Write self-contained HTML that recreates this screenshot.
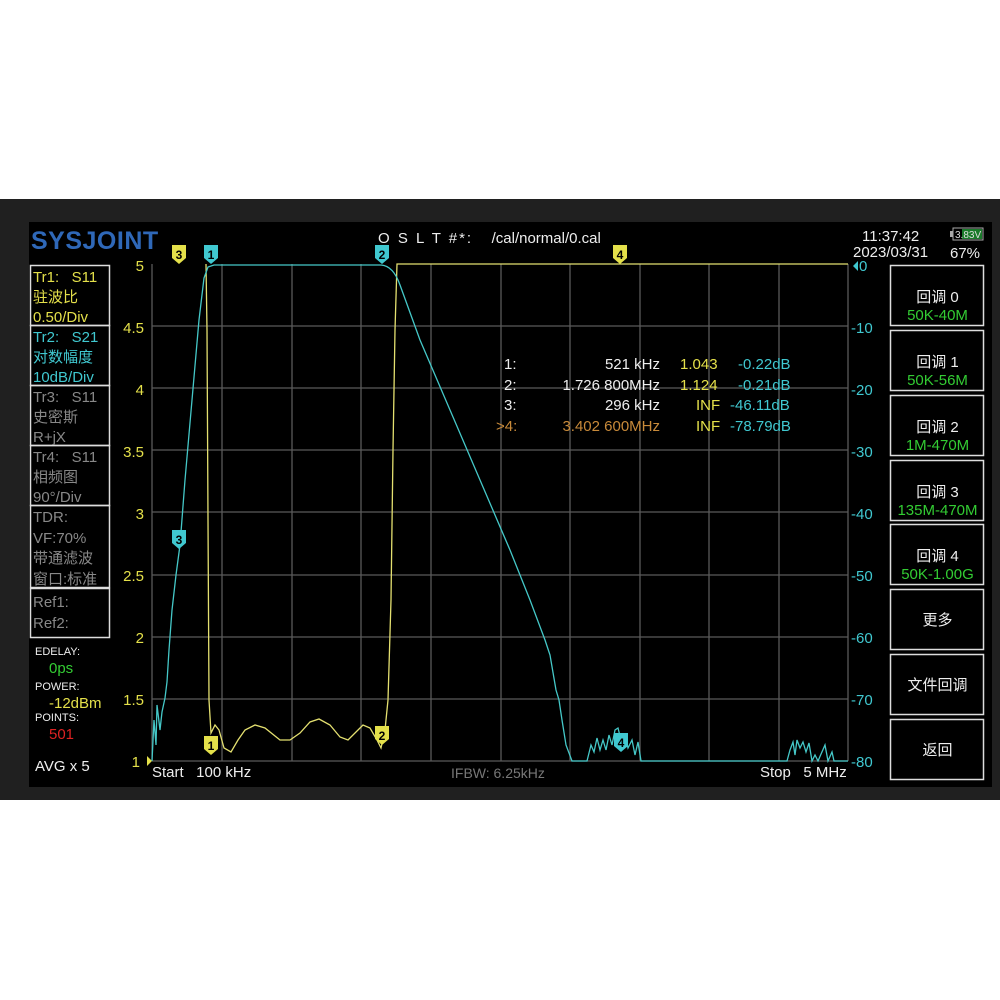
<!DOCTYPE html>
<html><head><meta charset="utf-8"><style>
html,body{margin:0;padding:0;background:#fff;width:1000px;height:1000px;overflow:hidden}
body{position:relative;font-family:"Liberation Sans","Noto Sans CJK SC",sans-serif}
.t{position:absolute;white-space:nowrap;font-size:13px;line-height:1}
</style></head><body>
<div style="position:absolute;left:0;top:199px;width:1000px;height:601px;background:#202020"></div>
<div style="position:absolute;left:29px;top:222px;width:963px;height:565px;background:#000"></div>
<svg width="1000" height="1000" style="position:absolute;left:0;top:0" font-family="Liberation Sans, Noto Sans CJK SC, sans-serif">
<g stroke="#5a5a5a" stroke-width="1.3">
<line x1="152" y1="326" x2="848" y2="326"/><line x1="152" y1="388" x2="848" y2="388"/><line x1="152" y1="450" x2="848" y2="450"/><line x1="152" y1="512" x2="848" y2="512"/><line x1="152" y1="575" x2="848" y2="575"/><line x1="152" y1="637" x2="848" y2="637"/><line x1="152" y1="699" x2="848" y2="699"/><line x1="152" y1="761" x2="848" y2="761"/>
<line x1="152" y1="264" x2="152" y2="761"/><line x1="222" y1="264" x2="222" y2="761"/><line x1="292" y1="264" x2="292" y2="761"/><line x1="361" y1="264" x2="361" y2="761"/><line x1="431" y1="264" x2="431" y2="761"/><line x1="501" y1="264" x2="501" y2="761"/><line x1="570" y1="264" x2="570" y2="761"/><line x1="640" y1="264" x2="640" y2="761"/><line x1="709" y1="264" x2="709" y2="761"/><line x1="779" y1="264" x2="779" y2="761"/><line x1="848" y1="264" x2="848" y2="761"/>
</g>
<path fill="none" stroke="#e4e070" stroke-width="1.3" d="M206,264 L207,330 L208,520 L209,700 L211,733 L215,725 L219,730 L224,748 L231,752 L238,740 L245,730 L255,725 L265,728 L280,740 L290,740 L300,733 L310,722 L319,719 L330,725 L340,737 L348,740 L356,732 L363,725 L370,728 L377,740 L381,748 L385,730 L388,700 L391,600 L393,450 L395,330 L397,264 L848,264"/>
<path fill="none" stroke="#45c8c8" stroke-width="1.3" d="M152,761 L154,720 L156,745 L157,705 L160,730 L162,712 L165,698 L167,682 L169,650 L172,610 L176,575 L180,545 L185,480 L192,400 L199,320 L204,278 L208,267 L214,265 L380,265 Q393,265 400,285 L420,340 L450,410 L480,480 L510,550 L530,600 L545,640 L550,655 L556,690 L559,700 L562,720 L566,745 L572,761 L587,761 L591,745 L594,752 L597,738 L600,750 L603,740 L606,750 L609,735 L612,745 L615,730 L618,728 L621,740 L625,735 L628,748 L632,740 L635,755 L638,742 L641,761 L787,761 L790,750 L793,742 L795,755 L797,740 L800,748 L803,742 L806,752 L809,743 L812,761 L815,755 L818,761 L825,745 L828,761 L832,752 L834,761 L848,761"/>
<g font-size="12" font-weight="bold" text-anchor="middle">
<g fill="#e4e04a"><path d="M172,245 h14 v13 l-7,6 l-7,-6z"/><path d="M613,245 h14 v13 l-7,6 l-7,-6z"/><path d="M204,736 h14 v13 l-7,6 l-7,-6z"/><path d="M375,726 h14 v13 l-7,6 l-7,-6z"/></g>
<g fill="#40c8d0"><path d="M204,245 h14 v13 l-7,6 l-7,-6z"/><path d="M375,245 h14 v13 l-7,6 l-7,-6z"/><path d="M172,530 h14 v13 l-7,6 l-7,-6z"/><path d="M614,733 h14 v13 l-7,6 l-7,-6z"/></g>
<g fill="#000"><text x="179" y="259">3</text><text x="620" y="259">4</text><text x="211" y="750">1</text><text x="382" y="740">2</text>
<text x="211" y="259">1</text><text x="382" y="259">2</text><text x="179" y="544">3</text><text x="621" y="747">4</text></g>
</g>
<path d="M147,756 l5,5 l-5,5z" fill="#e4e04a"/><path d="M858,261 l-5,5 l5,5z" fill="#40c8d0"/>
<g fill="none" stroke="#ddd" stroke-width="1.5">
<rect x="30.5" y="265.5" width="79" height="60"/><rect x="30.5" y="325.5" width="79" height="60"/><rect x="30.5" y="385.5" width="79" height="60"/><rect x="30.5" y="445.5" width="79" height="60"/><rect x="30.5" y="505.5" width="79" height="82"/><rect x="30.5" y="588.5" width="79" height="49"/>
<rect x="890.5" y="265.5" width="93" height="60"/><rect x="890.5" y="330.5" width="93" height="60"/><rect x="890.5" y="395.5" width="93" height="60"/><rect x="890.5" y="460.5" width="93" height="60"/><rect x="890.5" y="524.5" width="93" height="60"/><rect x="890.5" y="589.5" width="93" height="60"/><rect x="890.5" y="654.5" width="93" height="60"/><rect x="890.5" y="719.5" width="93" height="60"/>
</g>
<rect x="953" y="228" width="30" height="12" fill="none" stroke="#aaa"/><rect x="950" y="231" width="3" height="6" fill="#aaa"/><rect x="962" y="229" width="20" height="10" fill="#1a7a2a"/>
<text x="955" y="238" font-size="10" fill="#ddd">3.83V</text>
</svg>
<div class="t" style="left:31px;top:229px;font-size:25px;font-weight:bold;color:#2f68b8;letter-spacing:0.5px">SYSJOINT</div>
<div class="t" style="left:378px;top:231px;font-size:15px;color:#eee;letter-spacing:2px">O S L T #*: &nbsp; <span style="letter-spacing:0">/cal/normal/0.cal</span></div>
<div class="t" style="left:862px;top:229px;font-size:15px;color:#eee">11:37:42</div>
<div class="t" style="left:853px;top:245px;font-size:15px;color:#eee">2023/03/31</div>
<div class="t" style="left:950px;top:246px;font-size:15px;color:#eee">67%</div>
<div style="position:absolute;left:33px;top:268px;font-size:15px;line-height:20px;color:#e4e04a">Tr1:&nbsp;&nbsp;&nbsp;S11<br>驻波比<br>0.50/Div</div>
<div style="position:absolute;left:33px;top:328px;font-size:15px;line-height:20px;color:#40c8d0">Tr2:&nbsp;&nbsp;&nbsp;S21<br>对数幅度<br>10dB/Div</div>
<div style="position:absolute;left:33px;top:388px;font-size:15px;line-height:20px;color:#888">Tr3:&nbsp;&nbsp;&nbsp;S11<br>史密斯<br>R+jX</div>
<div style="position:absolute;left:33px;top:448px;font-size:15px;line-height:20px;color:#888">Tr4:&nbsp;&nbsp;&nbsp;S11<br>相频图<br>90°/Div</div>
<div style="position:absolute;left:33px;top:508px;font-size:15px;line-height:20.5px;color:#888">TDR:<br>VF:70%<br>带通滤波<br>窗口:标准</div>
<div style="position:absolute;left:33px;top:593px;font-size:15px;line-height:20.5px;color:#888">Ref1:<br>Ref2:</div>
<div class="t" style="left:35px;top:647px;font-size:11px;color:#eee">EDELAY:</div>
<div class="t" style="left:49px;top:661px;font-size:15px;color:#3c3">0ps</div>
<div class="t" style="left:35px;top:682px;font-size:11px;color:#eee">POWER:</div>
<div class="t" style="left:49px;top:696px;font-size:15px;color:#e4e04a">-12dBm</div>
<div class="t" style="left:35px;top:713px;font-size:11px;color:#eee">POINTS:</div>
<div class="t" style="left:49px;top:727px;font-size:15px;color:#d22">501</div>
<div class="t" style="left:35px;top:759px;font-size:15px;color:#eee">AVG x 5</div>
<div style="position:absolute;left:110px;top:259px;width:34px;text-align:right;font-size:15px;line-height:1;color:#e4e04a">
<div style="position:absolute;right:0;top:0">5</div><div style="position:absolute;right:0;top:62px">4.5</div><div style="position:absolute;right:0;top:124px">4</div><div style="position:absolute;right:0;top:186px">3.5</div><div style="position:absolute;right:0;top:248px">3</div><div style="position:absolute;right:0;top:310px">2.5</div><div style="position:absolute;right:0;top:372px">2</div><div style="position:absolute;right:0;top:434px">1.5</div><div style="position:absolute;right:4px;top:496px">1</div></div>
<div style="position:absolute;left:851px;top:259px;font-size:15px;line-height:1;color:#40c8d0">
<div style="position:absolute;left:8px;top:0">0</div><div style="position:absolute;left:0;top:62px">-10</div><div style="position:absolute;left:0;top:124px">-20</div><div style="position:absolute;left:0;top:186px">-30</div><div style="position:absolute;left:0;top:248px">-40</div><div style="position:absolute;left:0;top:310px">-50</div><div style="position:absolute;left:0;top:372px">-60</div><div style="position:absolute;left:0;top:434px">-70</div><div style="position:absolute;left:0;top:496px">-80</div></div>
<div class="t" style="left:152px;top:765px;font-size:15px;color:#eee">Start&nbsp;&nbsp; 100 kHz</div>
<div class="t" style="left:451px;top:766px;font-size:14px;color:#777">IFBW: 6.25kHz</div>
<div class="t" style="left:760px;top:765px;font-size:15px;color:#eee">Stop&nbsp;&nbsp; 5 MHz</div>
<div style="position:absolute;left:504px;top:355px;font-size:15px;line-height:20.7px;color:#eee">
<div style="position:relative;height:20.7px"><span style="position:absolute;left:0">1:</span><span style="position:absolute;right:-156px">521 kHz</span><span style="position:absolute;left:176px;color:#e4e04a">1.043</span><span style="position:absolute;left:234px;color:#40c8d0">-0.22dB</span></div>
<div style="position:relative;height:20.7px"><span style="position:absolute;left:0">2:</span><span style="position:absolute;right:-156px">1.726 800MHz</span><span style="position:absolute;left:176px;color:#e4e04a">1.124</span><span style="position:absolute;left:234px;color:#40c8d0">-0.21dB</span></div>
<div style="position:relative;height:20.7px"><span style="position:absolute;left:0">3:</span><span style="position:absolute;right:-156px">296 kHz</span><span style="position:absolute;left:192px;color:#e4e04a">INF</span><span style="position:absolute;left:226px;color:#40c8d0">-46.11dB</span></div>
<div style="position:relative;height:20.7px;color:#c88a3a"><span style="position:absolute;left:-8px">&gt;4:</span><span style="position:absolute;right:-156px">3.402 600MHz</span><span style="position:absolute;left:192px;color:#e4e04a">INF</span><span style="position:absolute;left:226px;color:#40c8d0">-78.79dB</span></div>
</div>
<div style="position:absolute;left:891px;top:266px;width:93px;text-align:center;font-size:15px;color:#eee">
<div style="position:absolute;left:0;width:93px;top:20px">回调 0</div><div style="position:absolute;left:0;width:93px;top:41px;color:#3c3">50K-40M</div>
<div style="position:absolute;left:0;width:93px;top:85px">回调 1</div><div style="position:absolute;left:0;width:93px;top:106px;color:#3c3">50K-56M</div>
<div style="position:absolute;left:0;width:93px;top:150px">回调 2</div><div style="position:absolute;left:0;width:93px;top:171px;color:#3c3">1M-470M</div>
<div style="position:absolute;left:0;width:93px;top:215px">回调 3</div><div style="position:absolute;left:0;width:93px;top:236px;color:#3c3">135M-470M</div>
<div style="position:absolute;left:0;width:93px;top:279px">回调 4</div><div style="position:absolute;left:0;width:93px;top:300px;color:#3c3">50K-1.00G</div>
<div style="position:absolute;left:0;width:93px;top:343px">更多</div>
<div style="position:absolute;left:0;width:93px;top:408px">文件回调</div>
<div style="position:absolute;left:0;width:93px;top:473px">返回</div>
</div>
</body></html>
